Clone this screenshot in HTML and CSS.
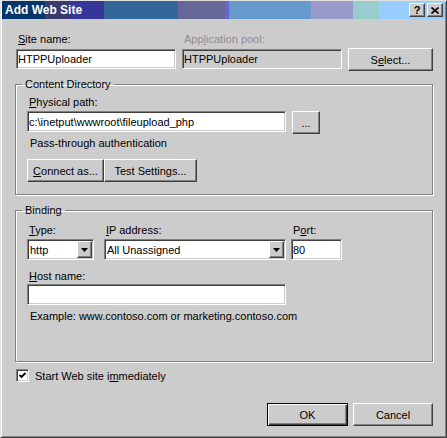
FILE: index.html
```html
<!DOCTYPE html>
<html lang="en">
<head>
    <meta charset="UTF-8">
    <title>Add Web Site</title>
    <link rel="stylesheet" href="styles.css">
</head>
<body>

    <div class="window">
        <div class="titlebar">
            <span class="title">Add Web Site</span>
            <div class="caption-buttons">
                <span class="cap-btn help">?</span>
                <span class="cap-btn">
                    <svg width="8" height="7" viewBox="0 0 8 7"><path d="M0.5 0.5 L7.5 6.5 M7.5 0.5 L0.5 6.5" stroke="#000" stroke-width="1.6" fill="none"/></svg>
                </span>
            </div>
        </div>

        <div class="content">
            <div class="top-row">
                <div class="field site">
                    <label class="lbl"><u>S</u>ite name:</label>
                    <input class="textbox" type="text" value="HTPPUploader">
                </div>
                <div class="field pool">
                    <label class="lbl disabled">App<u>l</u>ication pool:</label>
                    <input class="textbox readonly" type="text" value="HTPPUploader" readonly>
                </div>
                <div class="select-wrap">
                    <button class="btn select-btn">S<u>e</u>lect...</button>
                </div>
            </div>

            <fieldset class="group">
                <legend>Content Directory</legend>
                <div class="group-body dir-body">
                    <label class="lbl"><u>P</u>hysical path:</label>
                    <div class="path-row">
                        <input class="textbox path" type="text" value="c:\inetput\wwwroot\fileupload_php">
                        <button class="btn browse-btn">...</button>
                    </div>
                    <div class="note auth">Pass-through authentication</div>
                    <div class="btn-pair">
                        <button class="btn connect-btn"><u>C</u>onnect as...</button>
                        <button class="btn test-btn">Test Settin<u>g</u>s...</button>
                    </div>
                </div>
            </fieldset>

            <fieldset class="group binding">
                <legend>Binding</legend>
                <div class="group-body bind-body">
                    <div class="bind-row">
                        <div class="col type">
                            <label class="lbl"><u>T</u>ype:</label>
                            <div class="combo">
                                <span class="combo-value">http</span>
                                <span class="combo-arrow"><svg width="7" height="4" viewBox="0 0 7 4"><path d="M0 0 H7 L3.5 4 Z" fill="#000"/></svg></span>
                            </div>
                        </div>
                        <div class="col ip">
                            <label class="lbl"><u>I</u>P address:</label>
                            <div class="combo">
                                <span class="combo-value">All Unassigned</span>
                                <span class="combo-arrow"><svg width="7" height="4" viewBox="0 0 7 4"><path d="M0 0 H7 L3.5 4 Z" fill="#000"/></svg></span>
                            </div>
                        </div>
                        <div class="col port">
                            <label class="lbl">P<u>o</u>rt:</label>
                            <input class="textbox port-box" type="text" value="80">
                        </div>
                    </div>
                    <label class="lbl host-lbl"><u>H</u>ost name:</label>
                    <input class="textbox host" type="text" value="">
                    <div class="note example">Example: www.contoso.com or marketing.contoso.com</div>
                </div>
            </fieldset>

            <div class="check-row">
                <span class="checkbox">
                    <svg width="9" height="9" viewBox="0 0 9 9"><path d="M1.5 4 L3.5 6 L7.5 2" stroke="#000" stroke-width="1.8" fill="none"/></svg>
                </span>
                <span class="check-label">Start Web site i<u>m</u>mediately</span>
            </div>

            <div class="dialog-buttons">
                <button class="btn default ok-btn">OK</button>
                <button class="btn cancel-btn">Cancel</button>
            </div>
        </div>
    </div>

</body>
</html>
```

FILE: styles.css
```css
body {
    margin: 0;
    font-family: "Liberation Sans", Arial, sans-serif;
    font-size: 11px;
    color: #000;
    background: #cccccc;
}
.window {
    width: 447px;
    height: 438px;
    box-sizing: border-box;
    padding: 0 1px;
    background: #cccccc;
    border: 1px solid;
    border-color: #e0e0e0 #404040 #404040 #e0e0e0;
    box-shadow: inset 1px 1px #fff, inset -1px -1px #808080;
}

/* title bar */
.titlebar {
    height: 18px;
    display: flex;
    align-items: center;
    justify-content: space-between;
    padding: 0 2px 0 3px;
    background: linear-gradient(to right,
        #05366b 0, #05366b 43px,
        #3a3a6e 43px, #3a3a6e 68px,
        #363699 68px, #363699 102px,
        #336699 102px, #336699 176px,
        #666699 176px, #666699 223px,
        #6666cc 223px, #6666cc 227px,
        #6699cc 227px, #6699cc 309px,
        #9999cc 309px, #9999cc 351px,
        #99cccc 351px, #99cccc 377px,
        #99ccff 377px, #99ccff 100%);
}
.title {
    color: #fff;
    font-weight: bold;
    font-size: 12px;
}
.caption-buttons {
    display: flex;
    gap: 2px;
}
.cap-btn {
    width: 16px;
    height: 14px;
    box-sizing: border-box;
    display: flex;
    align-items: center;
    justify-content: center;
    background: #cccccc;
    border: 1px solid;
    border-color: #fff #404040 #404040 #fff;
    box-shadow: inset -1px -1px #808080;
    font-weight: bold;
    font-size: 11px;
    line-height: 1;
}

/* content */
.content {
    padding: 14px 12px 0 13px;
}
.lbl {
    display: block;
    height: 13px;
    line-height: 13px;
    padding-left: 2px;
}
.lbl.disabled {
    color: #8e8e8e;
}
.textbox {
    display: block;
    box-sizing: border-box;
    width: 100%;
    height: 20px;
    margin: 3px 0 0;
    padding: 0 1px;
    font: inherit;
    color: #000;
    background: #fff;
    border: 1px solid;
    border-color: #808080 #fff #fff #808080;
    box-shadow: inset 1px 1px #404040, inset -1px -1px #cccccc;
    outline: none;
}
.textbox.readonly {
    background: #cccccc;
}
.btn {
    box-sizing: border-box;
    height: 23px;
    padding: 0;
    font: inherit;
    color: #000;
    background: #cccccc;
    border: 1px solid;
    border-color: #fff #404040 #404040 #fff;
    box-shadow: inset -1px -1px #808080;
}
.btn.default {
    border-color: #000;
    box-shadow: inset 1px 1px #fff, inset -1px -1px #404040, inset -2px -2px #808080;
}

.top-row {
    display: flex;
}
.site {
    width: 160px;
    margin-left: 1px;
}
.pool {
    width: 160px;
    margin-left: 6px;
}
.select-wrap {
    margin-left: 6px;
    padding-top: 15px;
}
.select-btn {
    width: 85px;
}

/* group boxes */
.group {
    margin: 7px 0 0;
    padding: 0;
    min-width: 0;
    border: 1px solid #808080;
    box-shadow: inset 1px 1px #fff, 1px 1px #fff;
}
.group legend {
    margin-left: 6px;
    padding: 0 3px;
    line-height: 13px;
}
.group.binding {
    margin-top: 9px;
}
.group-body {
    padding: 5px 11px 12px 11px;
}
.bind-body {
    padding-top: 7px;
    padding-bottom: 38px;
}

.path-row {
    display: flex;
    align-items: flex-start;
    margin-top: 2px;
}
.textbox.path {
    width: 259px;
    height: 21px;
    margin: 0;
}
.browse-btn {
    width: 28px;
    margin-left: 6px;
}
.note {
    line-height: 13px;
    padding-left: 3px;
}
.auth {
    margin-top: 3px;
}
.btn-pair {
    display: flex;
    margin-top: 9px;
}
.connect-btn {
    width: 77px;
}
.test-btn {
    width: 93px;
}

.bind-row {
    display: flex;
}
.col.type {
    width: 67px;
}
.col.ip {
    width: 182px;
    margin-left: 10px;
}
.col.port {
    width: 51px;
    margin-left: 5px;
}
.combo {
    display: flex;
    align-items: center;
    box-sizing: border-box;
    height: 21px;
    margin-top: 2px;
    padding-left: 2px;
    background: #fff;
    border: 1px solid;
    border-color: #808080 #fff #fff #808080;
    box-shadow: inset 1px 1px #404040, inset -1px -1px #cccccc;
}
.combo-value {
    flex: 1;
}
.combo-arrow {
    width: 15px;
    height: 17px;
    box-sizing: border-box;
    margin-right: 1px;
    display: flex;
    align-items: center;
    justify-content: center;
    background: #cccccc;
    border: 1px solid;
    border-color: #fff #404040 #404040 #fff;
    box-shadow: inset -1px -1px #808080;
}
.textbox.port-box {
    height: 21px;
    margin-top: 2px;
}
.host-lbl {
    margin-top: 10px;
}
.textbox.host {
    width: 259px;
    height: 21px;
    margin-top: 1px;
}
.example {
    margin-top: 5px;
}

/* checkbox */
.check-row {
    display: flex;
    align-items: center;
    margin-top: 7px;
    height: 13px;
}
.checkbox {
    width: 13px;
    height: 13px;
    box-sizing: border-box;
    margin-left: 1px;
    display: flex;
    align-items: center;
    justify-content: center;
    background: #fff;
    border: 1px solid;
    border-color: #808080 #fff #fff #808080;
    box-shadow: inset 1px 1px #404040, inset -1px -1px #cccccc;
}
.check-label {
    margin-left: 6px;
}

.dialog-buttons {
    display: flex;
    justify-content: flex-end;
    gap: 5px;
    margin-top: 21px;
}
.ok-btn {
    width: 81px;
}
.cancel-btn {
    width: 80px;
}
```
